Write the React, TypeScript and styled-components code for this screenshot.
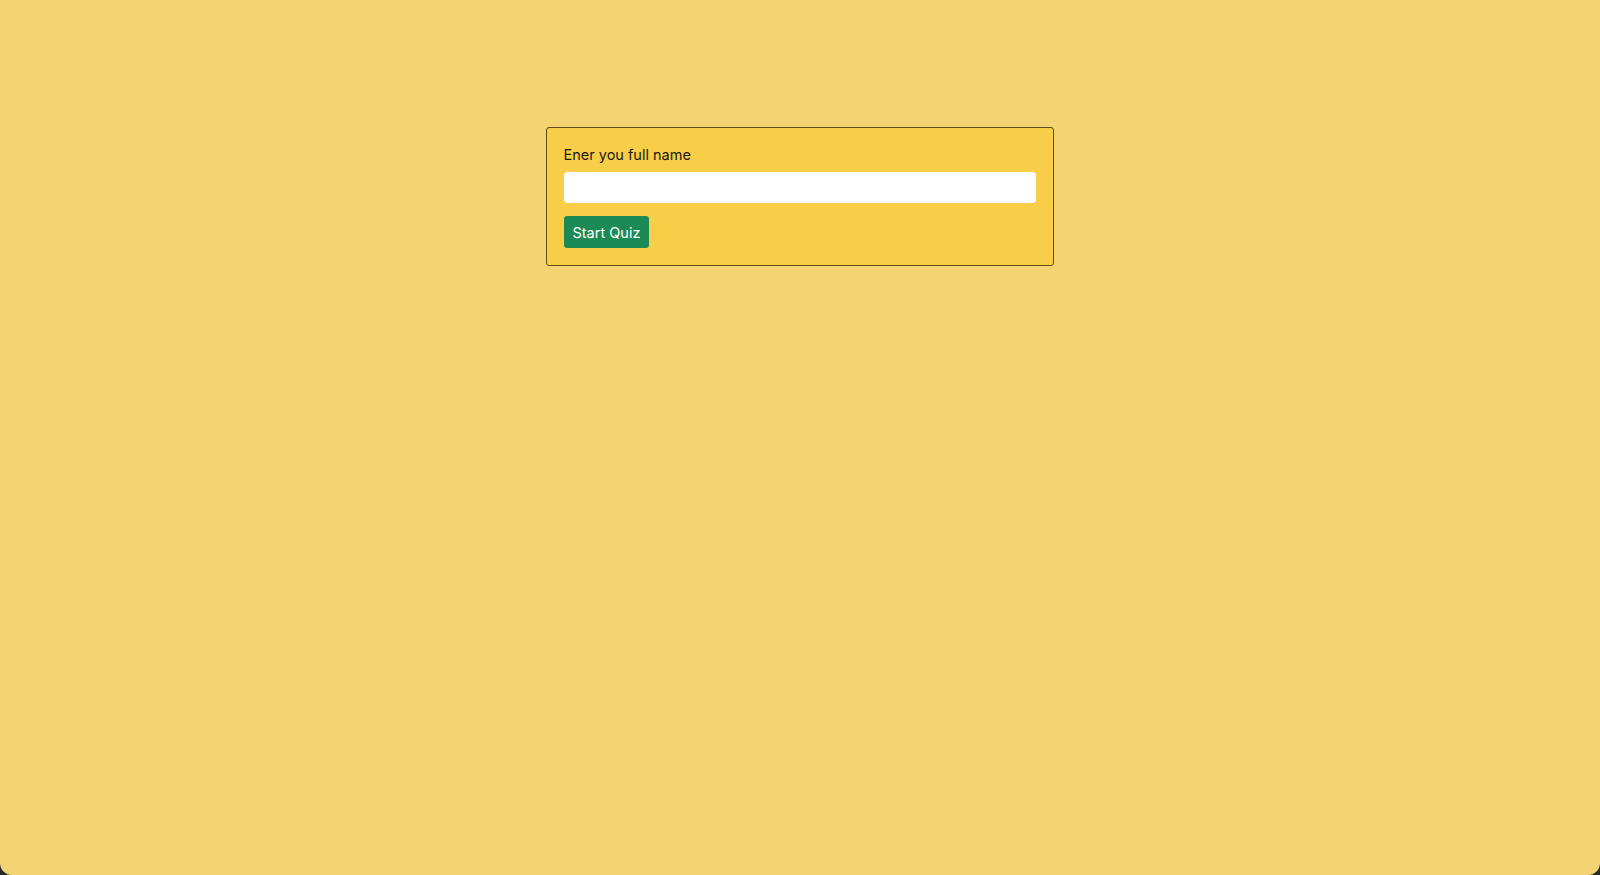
import * as React from 'react';
import styled, { createGlobalStyle } from 'styled-components';

const GlobalStyle = createGlobalStyle`
  html, body {
    margin: 0;
    padding: 0;
    height: 100%;
    background: #2a2a2a;
  }
  #root {
    height: 100%;
  }
`;

const Page = styled.div`
  height: 875px;
  box-sizing: border-box;
  background: #f4d472;
  border-radius: 0 0 12px 12px;
  padding-top: 127px;
  display: flex;
  justify-content: center;
  font-family: Inter, 'Open Sans', sans-serif;
`;

const Card = styled.div`
  width: 508px;
  height: 139px;
  box-sizing: border-box;
  margin-left: -1px;
  padding: 18px 17px 0;
  background: #f8cd48;
  border: 1px solid #5e4c14;
  border-radius: 3px;
  display: flex;
  flex-direction: column;
`;

const Label = styled.label`
  font-size: 14.5px;
  color: #1c1a12;
  line-height: 18px;
  margin-bottom: 8px;
`;

const NameInput = styled.input`
  height: 31px;
  box-sizing: border-box;
  border: none;
  border-radius: 4px;
  background: #fff;
  padding: 0 10px;
  font-size: 14px;
  outline: none;
  margin-bottom: 13px;
`;

const StartButton = styled.button`
  align-self: flex-start;
  height: 32px;
  padding: 0 9px;
  border: none;
  border-radius: 3px;
  background: #1b8a55;
  color: #fff;
  font-family: inherit;
  font-size: 14.5px;
  cursor: pointer;
`;

export default function App() {
  const [name, setName] = React.useState('');
  return (
    <>
      <GlobalStyle />
      <Page>
        <Card>
          <Label htmlFor="fullname">Ener you full name</Label>
          <NameInput id="fullname" value={name} onChange={(e) => setName(e.target.value)} />
          <StartButton>Start Quiz</StartButton>
        </Card>
      </Page>
    </>
  );
}
